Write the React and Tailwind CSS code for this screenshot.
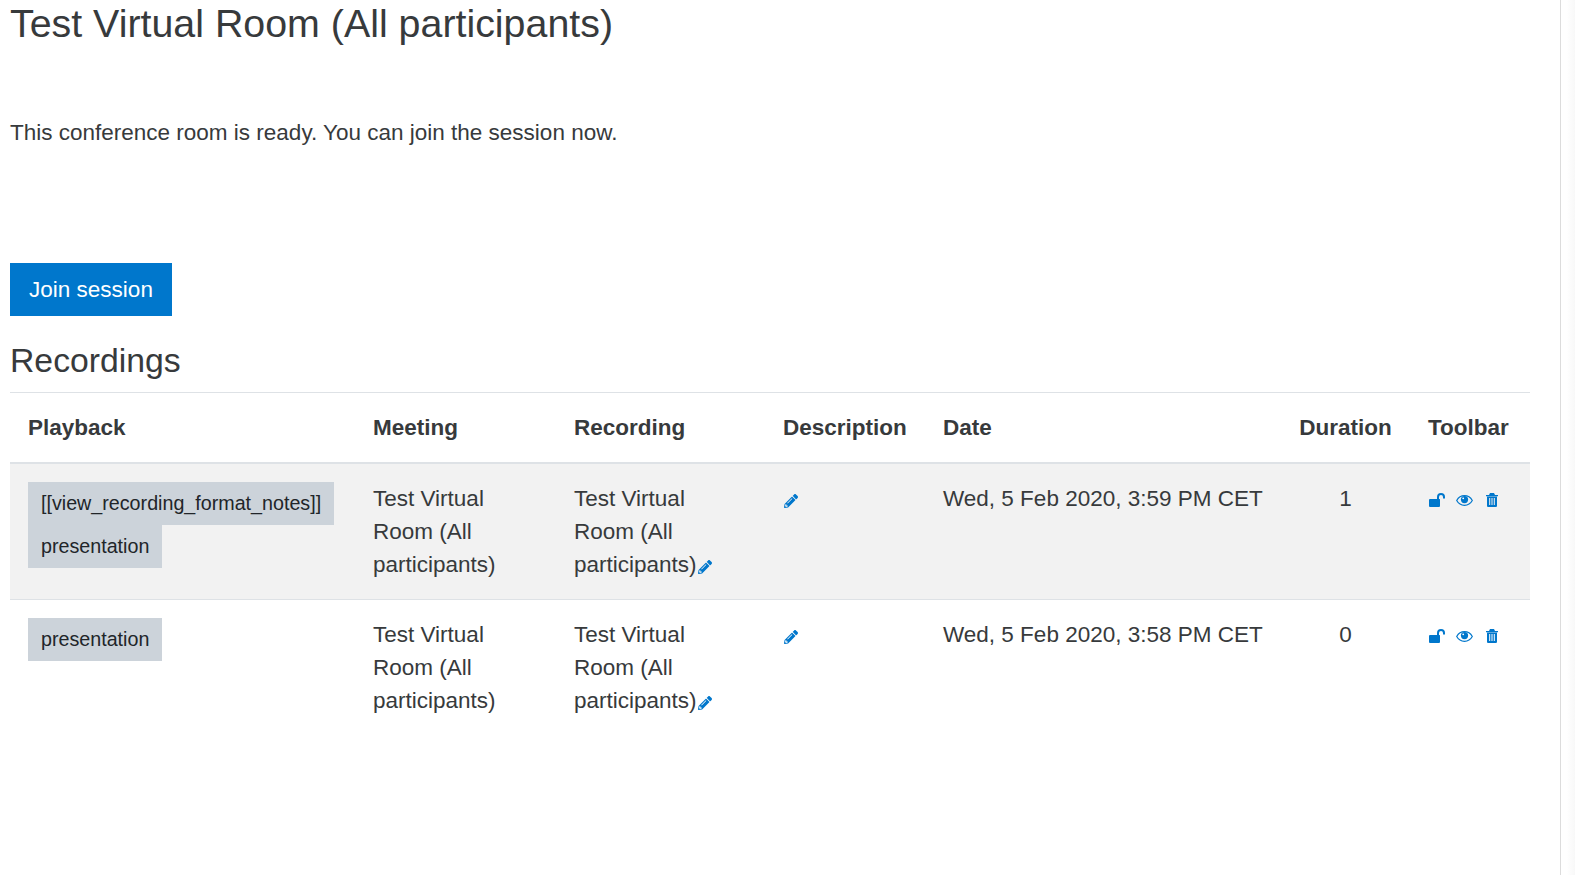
import React from 'react';
import { FaPencilAlt } from 'react-icons/fa';

const UnlockIcon = () => (
  <svg width="16" height="14" viewBox="0 0 16 14" fill="none" className="text-[#0077cc]">
    <path d="M1 6h9.500a.8.800 0 0 1 .5.800V13a1 1 0 0 1-1 1H1a1 1 0 0 1-1-1V7a1 1 0 0 1 1-1z" fill="currentColor" />
    <path d="M9 6V4a3 3 0 0 1 6 0v1.500" stroke="currentColor" strokeWidth="2" />
  </svg>
);

const EyeIcon = () => (
  <svg width="17" height="11" viewBox="0 0 17 11" className="text-[#0077cc]" fill="none">
    <path d="M.7 5.500C2.400 2.500 5.200.7 8.500.7s6.100 1.800 7.800 4.800c-1.700 3-4.500 4.800-7.800 4.800S2.400 8.500.7 5.500z" stroke="currentColor" strokeWidth="1.200" />
    <circle cx="8.500" cy="4.600" r="3.600" fill="currentColor" />
    <circle cx="7.200" cy="3.300" r="0.900" fill="white" />
  </svg>
);

const TrashIcon = () => (
  <svg width="12" height="14" viewBox="0 0 12 14" className="text-[#0077cc]" fill="currentColor">
    <path d="M4 0h4l1 2h3v1.200H0V2h3z" />
    <path fillRule="evenodd" d="M1 3.500h10v9.200c0 .7-.6 1.300-1.300 1.300H2.300C1.600 14 1 13.400 1 12.700zM3.200 5v7h1V5zM5.500 5v7h1V5zM7.800 5v7h1V5z" />
  </svg>
);

const Pencil = () => <FaPencilAlt className="inline-block ml-px text-[#0077cc] text-[14px] align-[-2px]" />;

const Toolbar = () => (
  <div className="flex items-center gap-[12px] h-[33px] pt-[3px] pl-px">
    <div className="-mr-px"><UnlockIcon /></div>
    <EyeIcon />
    <div className="ml-px"><TrashIcon /></div>
  </div>
);

const Badge = ({ children }) => (
  <span className="inline-block bg-[#ccd3da] text-[#212529] text-[19.69px] leading-[30px] px-[13px] pt-[6px] pb-[7px]">{children}</span>
);

const rows = [
  { formats: ['[[view_recording_format_notes]]', 'presentation'], date: 'Wed, 5 Feb 2020, 3:59 PM CET', duration: 1, shaded: true },
  { formats: ['presentation'], date: 'Wed, 5 Feb 2020, 3:58 PM CET', duration: 0, shaded: false },
];

const headers = ['Playback', 'Meeting', 'Recording', 'Description', 'Date', 'Duration', 'Toolbar'];

export default function App() {
  return (
    <div className="flex h-[875px] overflow-hidden bg-white text-[#373a3c] font-['Liberation_Sans',Arial,sans-serif]">
      <main className="w-[1560px] pl-[10px] pr-[30px]">
        <h2 className="text-[39.375px] leading-[46px] m-0">Test Virtual Room (All participants)</h2>
        <p className="text-[22.5px] leading-[33px] mt-[70px]">This conference room is ready. You can join the session now.</p>
        <button className="block mt-[114px] h-[53px] w-[162px] bg-[#0077cc] text-white text-[22.5px]">Join session</button>
        <h3 className="text-[33.75px] leading-[38px] mt-[25px] mb-[13px]">Recordings</h3>
        <table className="w-[1520px] table-fixed border-collapse text-[22.5px] leading-[33px]">
          <colgroup>
            <col className="w-[345px]" />
            <col className="w-[201px]" />
            <col className="w-[209px]" />
            <col className="w-[160px]" />
            <col className="w-[356px]" />
            <col className="w-[129px]" />
            <col className="w-[120px]" />
          </colgroup>
          <thead>
            <tr className="border-t border-[#dee2e6] border-b-2">
              {headers.map((h) => (
                <th key={h} className={`px-[18px] pt-[18px] pb-[18px] font-bold align-bottom whitespace-nowrap ${h === 'Duration' ? 'text-center' : 'text-left'}`}>{h}</th>
              ))}
            </tr>
          </thead>
          <tbody>
            {rows.map((r) => (
              <tr key={r.date} className={`border-b border-[#dee2e6] last:border-b-0 ${r.shaded ? 'bg-[#f2f2f2]' : ''}`}>
                <td className="px-[18px] pt-[18px] pb-[18px] align-top">
                  <div className="flex flex-col items-start">
                    {r.formats.map((f) => <Badge key={f}>{f}</Badge>)}
                  </div>
                </td>
                <td className="px-[18px] pt-[18px] pb-[18px] align-top">Test Virtual Room (All participants)</td>
                <td className="px-[18px] pt-[18px] pb-[18px] align-top">Test Virtual Room (All participants)<Pencil /></td>
                <td className="px-[18px] pt-[18px] pb-[18px] align-top"><Pencil /></td>
                <td className="px-[18px] pt-[18px] pb-[18px] align-top whitespace-nowrap">{r.date}</td>
                <td className="px-[18px] pt-[18px] pb-[18px] align-top text-center">{r.duration}</td>
                <td className="px-[18px] pt-[18px] pb-[18px] align-top"><Toolbar /></td>
              </tr>
            ))}
          </tbody>
        </table>
      </main>
      <div className="w-[15px] border-l border-[#dcdcdc] bg-linear-to-r from-white from-40% to-[#f8f8f8]" />
    </div>
  );
}
